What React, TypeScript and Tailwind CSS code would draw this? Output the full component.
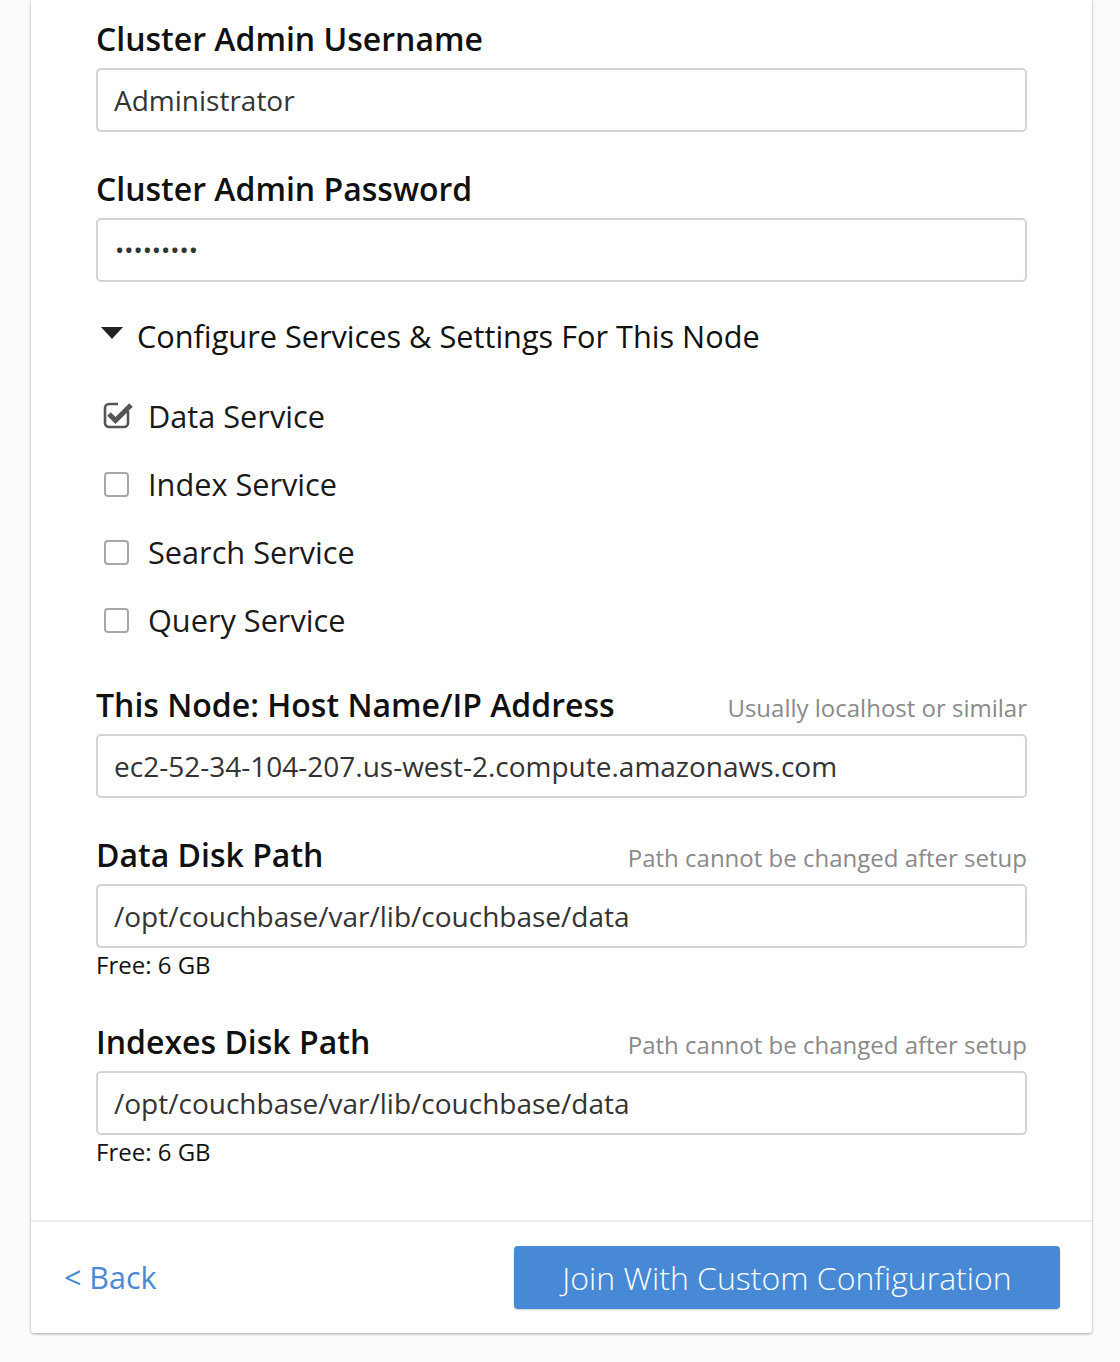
import React from "react";

const font = { fontFamily: '"Open Sans", "Noto Sans", Arial, sans-serif' };

function Field({
  label,
  hint,
  value,
  free,
  dots,
}: {
  label: string;
  hint?: string;
  value: string;
  free?: string;
  dots?: boolean;
}) {
  return (
    <div>
      <div className="flex items-baseline justify-between h-[38px] mb-[10px]">
        <label className="text-[32px] leading-[38px] font-semibold text-[#111]">{label}</label>
        {hint && <span className="text-[24px] leading-[38px] text-[#8a8a8a]">{hint}</span>}
      </div>
      <div
        className={
          dots
            ? "h-[64px] border-2 border-[#d3d3d3] rounded-[5px] bg-white flex items-center px-[17px] text-[24.5px] text-[#333]"
            : "h-[64px] border-2 border-[#d3d3d3] rounded-[5px] bg-white flex items-center px-[16px] text-[28px] text-[#333]"
        }
      >
        {value}
      </div>
      {free && <div className="text-[24px] leading-[28px] text-[#111] mt-[3px]">{free}</div>}
    </div>
  );
}

function Check({ checked, label }: { checked?: boolean; label: string }) {
  return (
    <div className="flex items-center h-[68px]">
      <div className="w-[53px] pl-[8px]">
        {checked ? (
          <svg width="31" height="28" viewBox="0 0 31 28" className="ml-[-1px] mt-[-2px]">
            <rect x="2" y="3" width="23" height="23" rx="4" fill="none" stroke="#555" strokeWidth="2.6" />
            <rect x="15" y="0" width="16" height="10" fill="white" />
            <path d="M6 13 L12.5 19.5 L28 4" fill="none" stroke="#555" strokeWidth="5" strokeLinejoin="miter" />
          </svg>
        ) : (
          <div className="w-[25px] h-[25px] border-2 border-[#a8a8a8] rounded-[4px]" />
        )}
      </div>
      <span className="text-[30.7px] text-[#1a1a1a] ml-[-1px]">{label}</span>
    </div>
  );
}

export default function App() {
  return (
    <div className="min-h-[1362px] bg-[#fbfbfb]" style={font}>
      <div className="ml-[31px] w-[1061px] bg-white rounded-b-[3px] shadow-[0_1px_3px_rgba(0,0,0,0.35)]">
        <div className="px-[65px] pt-[20px] pb-[54px]">
          <Field label="Cluster Admin Username" value="Administrator" />
          <div className="mt-[38px]">
            <Field label="Cluster Admin Password" value="•••••••••" dots />
          </div>

          <div className="flex items-center h-[40px] mt-[35px] mb-[25px]">
            <svg width="22" height="12" viewBox="0 0 22 12" className="ml-[5px] mr-[14px] mb-[8px]">
              <path d="M0 0 L22 0 L11 12 Z" fill="#222" />
            </svg>
            <span className="text-[30.7px] text-[#111] mb-[2px]">Configure Services &amp; Settings For This Node</span>
          </div>

          <Check checked label="Data Service" />
          <Check label="Index Service" />
          <Check label="Search Service" />
          <Check label="Query Service" />

          <div className="mt-[32px]">
            <Field
              label="This Node: Host Name/IP Address"
              hint="Usually localhost or similar"
              value="ec2-52-34-104-207.us-west-2.compute.amazonaws.com"
            />
          </div>
          <div className="mt-[38px]">
            <Field
              label="Data Disk Path"
              hint="Path cannot be changed after setup"
              value="/opt/couchbase/var/lib/couchbase/data"
              free="Free: 6 GB"
            />
          </div>
          <div className="mt-[44px]">
            <Field
              label="Indexes Disk Path"
              hint="Path cannot be changed after setup"
              value="/opt/couchbase/var/lib/couchbase/data"
              free="Free: 6 GB"
            />
          </div>
        </div>

        <div className="border-t-2 border-[#ececec] flex items-center justify-between pl-[33px] pr-[32px] pt-[24px] pb-[24px]">
          <a className="text-[30.5px] text-[#4a89d4] cursor-pointer">&lt; Back</a>
          <button className="h-[63px] w-[546px] bg-[#4789d4] rounded-[4px] text-white text-[32px] font-light shadow-[0_1px_2px_rgba(0,0,0,0.2)]">
            Join With Custom Configuration
          </button>
        </div>
      </div>
    </div>
  );
}
